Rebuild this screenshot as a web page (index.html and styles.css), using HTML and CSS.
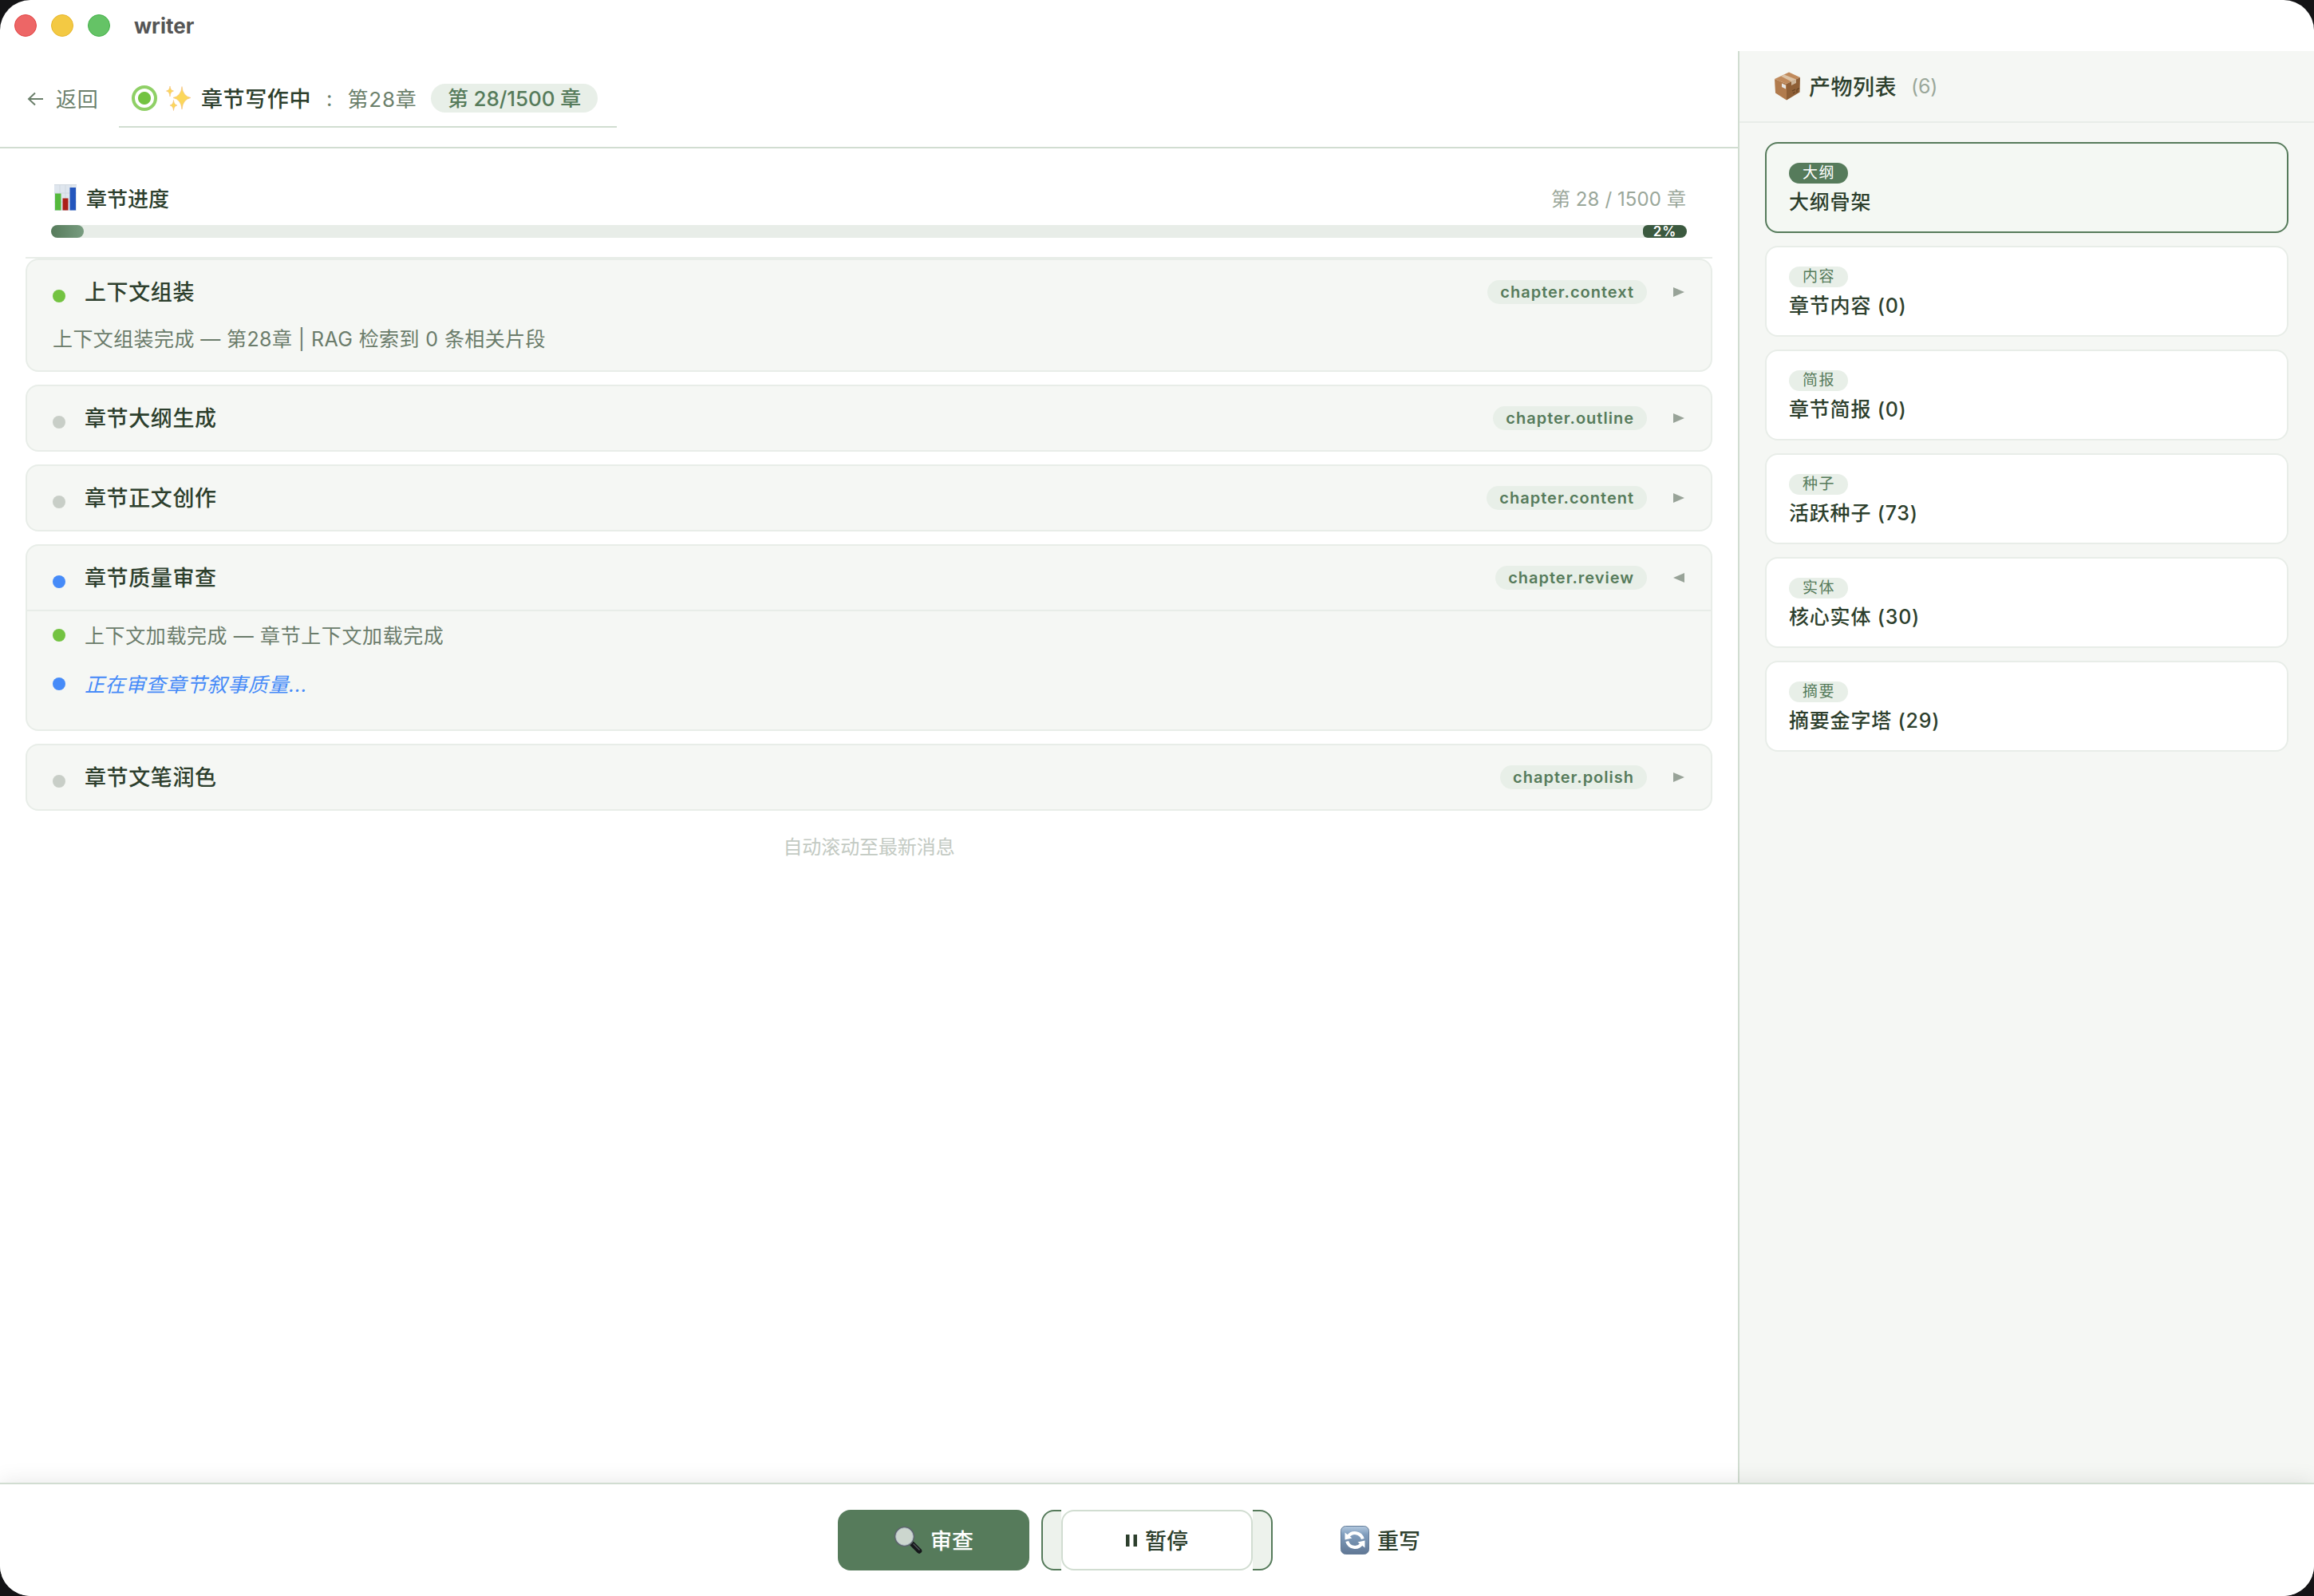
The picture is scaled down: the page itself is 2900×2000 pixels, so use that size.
FILE: index.html
```
<!DOCTYPE html>
<html lang="zh-CN">
<head>
    <meta charset="UTF-8">
    <meta name="viewport" content="width=device-width, initial-scale=1.0">
    <title>writer</title>
    <link rel="stylesheet" href="styles.css">
</head>
<body>
    <div class="window">
        <div class="titlebar">
            <i class="light red"></i>
            <i class="light yellow"></i>
            <i class="light green"></i>
            <span>writer</span>
        </div>
        <div class="main">
            <div class="left">
                <div class="header">
                    <a class="back">
                        <svg width="20" height="18" viewBox="0 0 20 18"><path d="M20 9H2M10 1.500L2 9L10 16.500" fill="none" stroke="#6b7f6b" stroke-width="2"/></svg>
                        <span>返回</span>
                    </a>
                    <div class="status">
                        <i class="ring"></i>
                        <svg class="sparkle" width="32" height="32" viewBox="0 0 32 32">
                            <g fill="#fbd75a" stroke="#f3bd7c" stroke-width="0.6">
                                <path d="M20 1.5Q21 13.5 31 15.5Q21 17.500 20 30Q19 17.500 9 15.500Q19 13.500 20 1.500Z"/>
                                <path d="M5 1Q5.500 6.300 9.500 7Q5.500 7.700 5 14Q4.500 7.700 0.500 7Q4.500 6.300 5 1Z"/>
                                <path d="M9.500 18.500Q10 24.200 14 25Q10 25.800 9.500 31.500Q9 25.800 5 25Q9 24.200 9.500 18.500Z"/>
                            </g>
                        </svg>
                        <b class="state">章节写作中</b>
                        <span class="colon">:</span>
                        <span class="chapter">第28章</span>
                        <span class="count">第 28/1500 章</span>
                    </div>
                </div>
                <div class="content">
                    <div class="progress">
                        <div class="progress-top">
                            <svg width="28" height="33" viewBox="0 0 28 33">
                                <rect width="28" height="33" fill="#dfe6ee"/>
                                <path d="M0 .5H28M7 0V33M14 0V33M21 0V33M0 11H28M0 22H28" stroke="#d0d7df" stroke-width="1"/>
                                <rect x="1" y="11.500" width="7.500" height="21" fill="#55b93d"/>
                                <rect x="10.500" y="17.500" width="7" height="15" fill="#ab1f17"/>
                                <rect x="19.500" y="4" width="7.500" height="28.500" fill="#2456bd"/>
                            </svg>
                            <b>章节进度</b>
                            <span>第 28 / 1500 章</span>
                        </div>
                        <div class="bar">
                            <div class="fill" style="width:2%"></div>
                            <div class="percent">2%</div>
                        </div>
                    </div>
                    <div class="card">
                        <div class="card-head">
                            <i class="dot done"></i><b>上下文组装</b><span class="tag">chapter.context</span><i class="arrow"></i>
                        </div>
                        <p class="desc">上下文组装完成 — 第28章 | RAG 检索到 0 条相关片段</p>
                    </div>
                    <div class="card">
                        <div class="card-head">
                            <i class="dot"></i><b>章节大纲生成</b><span class="tag">chapter.outline</span><i class="arrow"></i>
                        </div>
                    </div>
                    <div class="card">
                        <div class="card-head">
                            <i class="dot"></i><b>章节正文创作</b><span class="tag">chapter.content</span><i class="arrow"></i>
                        </div>
                    </div>
                    <div class="card">
                        <div class="card-head">
                            <i class="dot doing"></i><b>章节质量审查</b><span class="tag">chapter.review</span><i class="arrow open"></i>
                        </div>
                        <ul class="steps">
                            <li><i class="dot done"></i><span>上下文加载完成 — 章节上下文加载完成</span></li>
                            <li class="active"><i class="dot doing"></i><span>正在审查章节叙事质量...</span></li>
                        </ul>
                    </div>
                    <div class="card">
                        <div class="card-head">
                            <i class="dot"></i><b>章节文笔润色</b><span class="tag">chapter.polish</span><i class="arrow"></i>
                        </div>
                    </div>
                    <p class="hint">自动滚动至最新消息</p>
                </div>
            </div>
            <div class="right">
                <div class="right-head">
                    <svg width="34" height="36" viewBox="0 0 34 36">
                        <path d="M1 9L19 .5L33 7L16 15Z" fill="#c08a5b"/>
                        <path d="M1 9L16 15V35.500L2 26.500Z" fill="#b17b4d"/>
                        <path d="M16 15L33 7L32.500 25.500L16 35.500Z" fill="#8f5f36"/>
                        <path d="M9 5.500L13 3.500L28 9.500L22 12.200Z" fill="#dcc3a6"/>
                        <path d="M22 12.200L28 9.500V14L22 17Z" fill="#cdb59a"/>
                        <path d="M10 14.500L15 16.800V21.500L10 19Z" fill="#e6e6e4"/>
                        <path d="M23 24L27 22M24 27L26.500 25.500M29 22L32 20.500M29 26V22" stroke="#654223" stroke-width="1.200"/>
                    </svg>
                    <b>产物列表</b>
                    <span>(6)</span>
                </div>
                <ul class="list">
                    <li class="active"><span>大纲</span><b>大纲骨架</b></li>
                    <li><span>内容</span><b>章节内容 (0)</b></li>
                    <li><span>简报</span><b>章节简报 (0)</b></li>
                    <li><span>种子</span><b>活跃种子 (73)</b></li>
                    <li><span>实体</span><b>核心实体 (30)</b></li>
                    <li><span>摘要</span><b>摘要金字塔 (29)</b></li>
                </ul>
            </div>
        </div>
        <div class="footer">
            <div class="btn primary">
                <svg width="36" height="36" viewBox="0 0 36 36">
                    <path d="M23.500 23L32 31.500" stroke="#15171a" stroke-width="6.500" stroke-linecap="round"/>
                    <path d="M24.500 22.500L32.500 30.500" stroke="#55595d" stroke-width="1.200"/>
                    <circle cx="13.500" cy="13.500" r="11.700" fill="#ccd6ce" stroke="#5d656b" stroke-width="2"/>
                    <circle cx="13.500" cy="13.500" r="10.800" fill="none" stroke="#b8c4cc" stroke-width="1"/>
                </svg>
                <span>审查</span>
            </div>
            <div class="bracket">
                <div class="bracket-in">
                    <div class="btn">
                        <svg width="14" height="15" viewBox="0 0 14 15"><path d="M0 0H4.500V15H0ZM9.500 0H14V15H9.500Z" fill="#2d3f2d"/></svg>
                        <span>暂停</span>
                    </div>
                </div>
            </div>
            <div class="btn plain">
                <svg width="36" height="36" viewBox="0 0 36 36">
                    <defs><linearGradient id="blue" x1="0" y1="0" x2="0" y2="1"><stop offset="0" stop-color="#b3c9df"/><stop offset=".3" stop-color="#809dbd"/><stop offset="1" stop-color="#607794"/></linearGradient></defs>
                    <rect x=".5" y=".5" width="35" height="35" rx="6" fill="url(#blue)" stroke="#647c98"/>
                    <path d="M9.500 13.500A10.300 10.300 0 0 1 27.800 16.500M26.500 22.500A10.300 10.300 0 0 1 8.200 19.500" fill="none" stroke="#fff" stroke-width="4"/>
                    <path d="M5.500 8.500V17.500L14.500 15.500ZM30.500 27.500V18.500L21.500 20.500Z" fill="#fff"/>
                </svg>
                <span>重写</span>
            </div>
        </div>
    </div>
</body>
</html>
```
FILE: styles.css
```
*{
    margin: 0;
    padding: 0;
    box-sizing: border-box;
    list-style: none;
}
body{
    background-color: #141416;
    font-family: Inter, "Noto Sans CJK SC", sans-serif;
    font-size: 26px;
    color: #2d3f2d;
}
svg, i{
    display: block;
    flex-shrink: 0;
}
b{
    font-weight: 500;
}
.window{
    width: 2900px;
    height: 2000px;
    display: flex;
    flex-direction: column;
    background-color: #fff;
    border-radius: 38px;
    overflow: hidden;
}
.titlebar{
    height: 64px;
    padding-left: 18px;
    display: flex;
    align-items: center;
    gap: 18px;
}
.titlebar span{
    margin-left: 12px;
    font-weight: 700;
    font-size: 26px;
    color: #555;
}
.light{
    width: 28px;
    height: 28px;
    border-radius: 50%;
}
.red{
    background-color: #ed6666;
    border: 1px solid #e14444;
}
.yellow{
    background-color: #f3c943;
    border: 1px solid #e6b52a;
}
.green{
    background-color: #65c366;
    border: 1px solid #43b049;
}
.main{
    flex: 1;
    display: flex;
}
.left{
    width: 2178px;
}
.header{
    height: 122px;
    border-bottom: 2px solid #d1ddd1;
    padding: 24px 0 0 34px;
    display: flex;
    align-items: flex-start;
}
.back{
    height: 72px;
    width: 115px;
    display: flex;
    align-items: center;
    gap: 16px;
    color: #6b7f6b;
}
.back span{
    padding-bottom: 3px;
    letter-spacing: 0.8px;
}
.status{
    width: 624px;
    height: 72px;
    padding: 0 24px 0 16px;
    border-bottom: 2px solid #d1ddd1;
    display: flex;
    align-items: center;
}
.ring{
    width: 32px;
    height: 32px;
    border: 4px solid #8fd066;
    border-radius: 50%;
    background: radial-gradient(circle, #73c341 7.5px, #fff 8.5px);
}
.sparkle{
    margin: 0 12px 0 11px;
}
.state{
    padding-bottom: 1px;
    font-size: 27px;
    letter-spacing: 0.6px;
}
.colon{
    margin: 0 19px 0 19px;
    color: #6b7f6b;
}
.chapter{
    padding-bottom: 2px;
    letter-spacing: 0.8px;
    color: #6b7f6b;
}
.count{
    margin-left: auto;
    width: 209px;
    height: 36px;
    line-height: 38px;
    border-radius: 18px;
    text-align: center;
    background-color: #e8efe8;
    color: #567b5b;
    font-weight: 500;
    letter-spacing: -0.1px;
    white-space: nowrap;
}
.content{
    padding: 0 32px;
}
.progress{
    height: 138px;
    padding: 36px 32px 0;
    border-bottom: 2px solid #e8ede8;
}
.progress-top{
    height: 50px;
    padding: 0 1px 0 4px;
    display: flex;
    align-items: center;
}
.progress-top b{
    flex: 1;
    margin-left: 12px;
}
.progress-top span{
    font-size: 24px;
    letter-spacing: 0.1px;
    color: #9aa79a;
}
.bar{
    margin-top: 10px;
    height: 16px;
    border-radius: 8px;
    background-color: #e8ede8;
    display: flex;
    justify-content: space-between;
}
.fill{
    height: 16px;
    border-radius: 8px;
    background: linear-gradient(90deg, #567b5b, #789c80);
}
.percent{
    width: 55px;
    height: 16px;
    line-height: 16px;
    border-radius: 6px 8px 8px 6px;
    text-align: center;
    background-color: #3b593f;
    color: #fff;
    font-size: 17px;
    font-weight: 600;
    letter-spacing: 1px;
}
.card{
    background-color: #f5f7f4;
    border: 2px solid #e8ede8;
    border-radius: 16px;
    margin-bottom: 16px;
}
.card-head{
    height: 80px;
    padding: 0 33px 0 32px;
    display: flex;
    align-items: center;
}
.card-head b{
    flex: 1;
    padding-bottom: 3px;
    font-size: 27px;
    letter-spacing: 0.6px;
}
.dot{
    width: 16px;
    height: 16px;
    margin-right: 24px;
    border-radius: 50%;
    background-color: #c8cec7;
}
.card-head .dot{
    margin-top: 10px;
}
.done{
    background-color: #73c341;
}
.doing{
    background-color: #468bf8;
}
.tag{
    height: 30px;
    line-height: 30px;
    padding: 0 16px;
    border-radius: 15px;
    background-color: #e8efe8;
    color: #567b5b;
    font-size: 20px;
    font-weight: 600;
    letter-spacing: 1px;
}
.arrow{
    margin-left: 33px;
    border-left: 14px solid #98a398;
    border-top: 6.5px solid transparent;
    border-bottom: 6.5px solid transparent;
}
.open{
    transform: scaleX(-1);
}
.desc{
    height: 58px;
    padding-left: 32px;
    line-height: 38px;
    color: #6b7c6b;
    font-size: 25px;
    letter-spacing: 0.4px;
}
.steps{
    height: 150px;
    border-top: 2px solid #e8ede8;
}
.steps li{
    height: 62px;
    padding-left: 32px;
    display: flex;
    align-items: center;
    font-size: 25px;
    letter-spacing: 0.6px;
    color: #6b7c6b;
}
.steps li:first-child{
    height: 60px;
}
.steps span{
    padding-bottom: 2px;
}
.steps .active{
    color: #468bf8;
    font-style: italic;
}
.hint{
    padding-top: 12px;
    line-height: 36px;
    text-align: center;
    font-size: 24px;
    letter-spacing: -0.1px;
    color: #c3cac3;
}
.right{
    flex: 1;
    background-color: #f5f7f4;
    border-left: 2px solid #d1ddd1;
}
.right-head{
    height: 90px;
    padding-left: 43px;
    border-bottom: 2px solid #e8ede8;
    display: flex;
    align-items: center;
}
.right-head b{
    margin: 0 18px 0 10px;
    padding-bottom: 1px;
    font-size: 27px;
    letter-spacing: 0.5px;
}
.right-head span{
    font-size: 25px;
    letter-spacing: -0.2px;
    color: #9aa79a;
}
.list{
    padding: 24px 32px;
    display: flex;
    flex-direction: column;
    gap: 16px;
}
.list li{
    height: 114px;
    padding: 24px 28px 0;
    border: 2px solid #e8ede8;
    border-radius: 16px;
    background-color: #fff;
}
.list span{
    display: block;
    width: 74px;
    height: 26px;
    line-height: 26px;
    border-radius: 13px;
    text-align: center;
    font-size: 19px;
    letter-spacing: 1.4px;
    text-indent: 1px;
    background-color: #e8efe8;
    color: #567b5b;
}
.list b{
    display: block;
    line-height: 46px;
    font-size: 25px;
    letter-spacing: 0.8px;
}
.list .active{
    border-color: #567b5b;
    background-color: #f4f8f3;
}
.list .active span{
    background-color: #567b5b;
    color: #fff;
}
.footer{
    height: 142px;
    border-top: 2px solid #d1ddd1;
    box-shadow: 0 -4px 24px rgba(0,0,0,0.08);
    background-color: #fff;
    display: flex;
    justify-content: center;
    align-items: center;
}
.btn{
    width: 240px;
    height: 76px;
    border-radius: 16px;
    display: flex;
    justify-content: center;
    align-items: center;
    gap: 10px;
    font-size: 27px;
    font-weight: 500;
}
.btn span{
    padding-bottom: 2px;
}
.primary{
    background-color: #567b5b;
    color: #fff;
}
/* 左右括号样式的外框，中间用白底盖住上下边框 */
.bracket{
    width: 290px;
    height: 76px;
    margin: 0 15px;
    border: 2px solid #567b5b;
    border-radius: 16px;
    background-color: #edf2ec;
    display: flex;
    justify-content: center;
    align-items: center;
}
.bracket-in{
    flex-shrink: 0;
    margin: -2px 0;
    background-color: #fff;
}
.bracket .btn{
    border: 2px solid #d1ddd1;
}
```
